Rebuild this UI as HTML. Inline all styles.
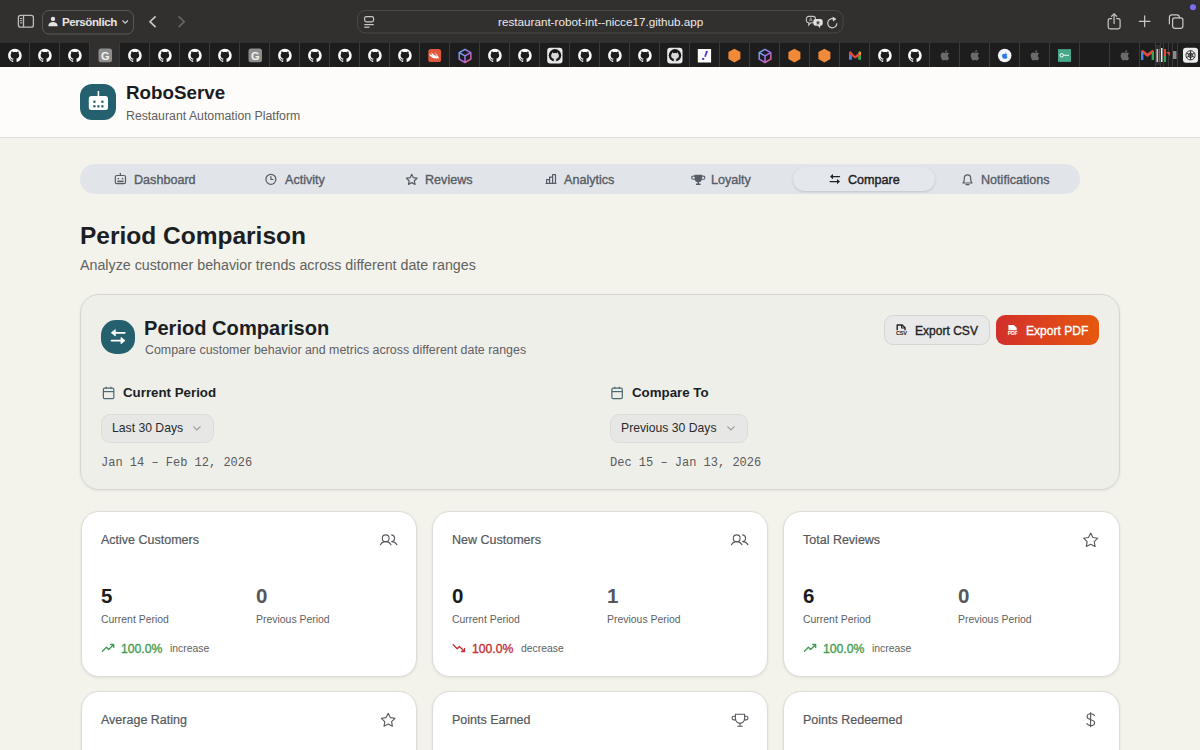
<!DOCTYPE html>
<html><head><meta charset="utf-8">
<style>
*{box-sizing:border-box;margin:0;padding:0}
html,body{width:1200px;height:750px;overflow:hidden;background:#f3f3ec;font-family:"Liberation Sans",sans-serif;position:relative}
.t{position:absolute;white-space:nowrap;line-height:1}
svg{position:absolute;overflow:visible}
.b{position:absolute}
#chrome{position:absolute;left:0;top:0;width:1200px;height:43px;background:#32302f}
#tabs{position:absolute;left:0;top:43px;width:1200px;height:24px;background:#1d1d1d}
.sep{position:absolute;top:43px;width:1px;height:24px;background:#3b3b3b}
#header{position:absolute;left:0;top:67px;width:1200px;height:71px;background:#fdfcfa;border-bottom:1px solid #dfddd8}
.logo{position:absolute;left:80px;top:84px;width:36px;height:36px;border-radius:12px;background:#24606e}
#nav{position:absolute;left:80px;top:164px;width:1000px;height:30px;border-radius:15px;background:#e1e4e9}
.pill{position:absolute;left:793px;top:167px;width:142px;height:24px;border-radius:12px;background:#e4e7ec;box-shadow:0 1px 2.5px rgba(0,0,0,.14)}
.nav{font-size:12.6px;color:#575d66;top:174px;-webkit-text-stroke:0.35px #575d66}
#pc{position:absolute;left:80px;top:294px;width:1040px;height:196px;border-radius:19px;background:#efefea;border:1px solid #d6d7d1;box-shadow:0 1px 3px rgba(0,0,0,.07)}
.btn{position:absolute;top:315px;height:30px;border-radius:9px}
.dd{position:absolute;top:414px;height:29px;border-radius:9px;background:#e7e7e5;border:1px solid #dcdcd9}
.card{position:absolute;width:336px;height:166px;border-radius:18px;background:#fff;border:1px solid #dddcd7;box-shadow:0 1px 3px rgba(0,0,0,.08)}
.ct{font-size:12.5px;color:#56595d;-webkit-text-stroke:0.22px #56595d}
.val{font-size:20.5px;font-weight:bold;letter-spacing:0.3px}
.lbl{font-size:10.45px;color:#5d5f62}
.pct{font-size:12.2px;-webkit-text-stroke:0.35px currentColor}
.inc{font-size:10.4px;color:#5d5f62}
.mono{font-family:"Liberation Mono",monospace;font-size:12px;color:#5a5a5a}
.ic{fill:none;stroke:#575d66;stroke-width:1.2;stroke-linecap:round;stroke-linejoin:round}
.ci{fill:none;stroke:#55585c;stroke-width:1.1;stroke-linecap:round;stroke-linejoin:round}
</style></head>
<body>
<svg width="0" height="0" style="position:absolute">
<defs>
<path id="gh" d="M8 0C3.58 0 0 3.58 0 8c0 3.54 2.29 6.53 5.47 7.59.4.07.55-.17.55-.38 0-.19-.01-.82-.01-1.49-2.01.37-2.53-.49-2.69-.94-.09-.23-.48-.94-.82-1.130-.28-.15-.68-.52-.01-.53.63-.01 1.08.58 1.23.82.72 1.21 1.87.87 2.33.66.07-.52.28-.87.51-1.07-1.78-.2-3.64-.89-3.64-3.95 0-.87.31-1.59.82-2.15-.08-.2-.36-1.02.08-2.12 0 0 .67-.21 2.2.82.64-.18 1.32-.27 2-.27.68 0 1.36.09 2 .27 1.53-1.04 2.2-.82 2.2-.82.44 1.1.16 1.92.08 2.12.51.56.82 1.27.82 2.15 0 3.07-1.87 3.75-3.65 3.95.29.25.54.73.54 1.48 0 1.07-.01 1.93-.01 2.2 0 .21.15.46.55.38A8.013 8.013 0 0 0 16 8c0-4.42-3.58-8-8-8z"/>
<path id="apple" d="M11.2 8.5c0-1.6 1.3-2.3 1.4-2.4-.8-1.1-1.9-1.3-2.3-1.3-1-.1-1.9.6-2.4.6-.5 0-1.2-.6-2-.6C4.900 4.800 3.900 5.400 3.400 6.300c-1.1 1.900-.3 4.700.8 6.200.5.7 1.100 1.600 1.900 1.500.8 0 1-.5 2-.5s1.200.5 2 .5c.8 0 1.300-.8 1.800-1.500.6-.8.8-1.600.8-1.700 0 0-1.500-.6-1.500-2.300zM9.700 3.800c.4-.5.7-1.200.6-1.900-.6 0-1.300.4-1.700.9-.4.400-.7 1.100-.6 1.800.7.100 1.300-.3 1.700-.8z"/>
<path id="star" d="M12 2.5l2.9 6.1 6.6.8-4.9 4.6 1.300 6.600L12 17.300 6.100 20.600l1.300-6.600L2.500 9.400l6.600-.8z"/>
</defs></svg>

<!-- ============ browser chrome ============ -->
<div id="chrome"></div>
<!-- sidebar icon -->
<svg style="left:0;top:0" width="1200" height="43" viewBox="0 0 1200 43">
  <g fill="none" stroke="#bdbcbb" stroke-width="1.3">
    <rect x="18.4" y="15.4" width="15" height="11.8" rx="2.2"/>
    <line x1="23.5" y1="15.4" x2="23.5" y2="27.2"/>
  </g>
  <g fill="#bdbcbb"><rect x="20" y="18" width="2.3" height="1"/><rect x="20" y="20.2" width="2.3" height="1"/><rect x="20" y="22.4" width="2.3" height="1"/></g>
  <rect x="42.5" y="10.5" width="91" height="23.5" rx="6.5" fill="none" stroke="#5a5856" stroke-width="1"/>
  <!-- person -->
  <circle cx="53" cy="18.9" r="2.2" fill="#e4e4e4"/>
  <path d="M48.3 26.2c0-2.8 2.2-4.2 4.7-4.2s4.7 1.4 4.7 4.200z" fill="#e4e4e4"/>
  <path d="M122.5 20.5l2.7 2.700 2.700-2.700" fill="none" stroke="#cfcfcf" stroke-width="1.2"/>
  <path d="M155.6 16.3l-5.6 5.400 5.600 5.400" fill="none" stroke="#c9c9c9" stroke-width="1.6"/>
  <path d="M178.6 16.3l5.6 5.400-5.600 5.400" fill="none" stroke="#676665" stroke-width="1.6"/>
  <!-- url bar -->
  <rect x="357.5" y="10.5" width="485.5" height="22.5" rx="8" fill="#32302f" stroke="#4a4846" stroke-width="1"/>
  <g fill="none" stroke="#c8c8c8" stroke-width="1.2">
    <rect x="364.6" y="16.6" width="9" height="5.2" rx="1.8"/>
    <line x1="364.3" y1="24.600" x2="373.8" y2="24.6"/>
    <line x1="364.3" y1="27.200" x2="369.5" y2="27.2"/>
  </g>
  <!-- translate -->
  <path d="M808.600 16.400h4.600a2.200 2.200 0 0 1 2.200 2.200v2a2.200 2.200 0 0 1-2.200 2.200h-2.600l-1.900 2.200v-2.200h-.1a2.200 2.200 0 0 1-2.200-2.200v-2a2.200 2.200 0 0 1 2.200-2.200z" fill="none" stroke="#c4c4c4" stroke-width="1.1"/>
  <path d="M809.300 21.300l1.500-3.600 1.500 3.600M809.800 20.200h2" fill="none" stroke="#aaa" stroke-width="0.8"/>
  <path d="M815.600 19h4.800a2.300 2.300 0 0 1 2.300 2.300v2.100a2.300 2.300 0 0 1-2.300 2.300h-.3v2.500l-2.200-2.500h-2.300a2.300 2.300 0 0 1-2.300-2.300v-2.100a2.300 2.300 0 0 1 2.300-2.300z" fill="#e2e2e2"/>
  <path d="M818 20.300l.7 1.500 1.600.2-1.200 1.100.3 1.600-1.400-.8-1.400.8.3-1.600-1.200-1.100 1.600-.2z" fill="#555"/>
  <path d="M835.300 19.700a4.600 4.600 0 1 0 1.600 3.600" fill="none" stroke="#cfcfcf" stroke-width="1.2"/>
  <path d="M832.600 16.500l3.700 2.600-3.300 2.300z" fill="#d8d8d8"/>
  <!-- share -->
  <g fill="none" stroke="#c8c8c8" stroke-width="1.2" stroke-linecap="round" stroke-linejoin="round">
    <path d="M1111.600 18.600h-1.600a1.800 1.800 0 0 0-1.800 1.800v6.600a1.800 1.800 0 0 0 1.800 1.800h8.300a1.800 1.800 0 0 0 1.800-1.800v-6.600a1.800 1.800 0 0 0-1.800-1.800h-1.600"/>
    <line x1="1114.100" y1="14" x2="1114.100" y2="23.500"/>
    <path d="M1111.600 16.300l2.500-2.400 2.500 2.400"/>
    <line x1="1139.300" y1="21.300" x2="1150" y2="21.300"/>
    <line x1="1144.650" y1="15.900" x2="1144.650" y2="26.600"/>
    <rect x="1172.600" y="17.800" width="10.300" height="10.500" rx="2.200"/>
    <path d="M1169.400 23.800v-6.700a2.300 2.300 0 0 1 2.300-2.300h5.300a2.300 2.300 0 0 1 2.300 2.300v.7"/>
  </g>
  <circle cx="1193" cy="7.2" r="3" fill="#7b6ef2"/>
</svg>
<div class="t" style="left:62px;top:16px;font-size:11.6px;letter-spacing:-0.45px;font-weight:bold;color:#e6e6e6">Persönlich</div>
<div class="t" style="left:498px;top:16px;font-size:11.7px;color:#e9e9e9">restaurant-robot-int--nicce17.github.app</div>

<!-- tab strip -->
<div id="tabs"></div>
<div class="b" style="left:90px;top:43px;width:30px;height:24px;background:#32302f"></div>
<svg style="left:0;top:43px" width="1200" height="24" viewBox="0 0 1200 24" id="tabsvg"><rect x="29" y="0" width="1" height="24" fill="#3a3a3a"/><rect x="59" y="0" width="1" height="24" fill="#3a3a3a"/><rect x="89" y="0" width="1" height="24" fill="#3a3a3a"/><rect x="119" y="0" width="1" height="24" fill="#3a3a3a"/><rect x="149" y="0" width="1" height="24" fill="#3a3a3a"/><rect x="179" y="0" width="1" height="24" fill="#3a3a3a"/><rect x="209" y="0" width="1" height="24" fill="#3a3a3a"/><rect x="239" y="0" width="1" height="24" fill="#3a3a3a"/><rect x="269" y="0" width="1" height="24" fill="#3a3a3a"/><rect x="299" y="0" width="1" height="24" fill="#3a3a3a"/><rect x="329" y="0" width="1" height="24" fill="#3a3a3a"/><rect x="359" y="0" width="1" height="24" fill="#3a3a3a"/><rect x="389" y="0" width="1" height="24" fill="#3a3a3a"/><rect x="419" y="0" width="1" height="24" fill="#3a3a3a"/><rect x="449" y="0" width="1" height="24" fill="#3a3a3a"/><rect x="479" y="0" width="1" height="24" fill="#3a3a3a"/><rect x="509" y="0" width="1" height="24" fill="#3a3a3a"/><rect x="539" y="0" width="1" height="24" fill="#3a3a3a"/><rect x="569" y="0" width="1" height="24" fill="#3a3a3a"/><rect x="599" y="0" width="1" height="24" fill="#3a3a3a"/><rect x="629" y="0" width="1" height="24" fill="#3a3a3a"/><rect x="659" y="0" width="1" height="24" fill="#3a3a3a"/><rect x="689" y="0" width="1" height="24" fill="#3a3a3a"/><rect x="719" y="0" width="1" height="24" fill="#3a3a3a"/><rect x="749" y="0" width="1" height="24" fill="#3a3a3a"/><rect x="779" y="0" width="1" height="24" fill="#3a3a3a"/><rect x="809" y="0" width="1" height="24" fill="#3a3a3a"/><rect x="839" y="0" width="1" height="24" fill="#3a3a3a"/><rect x="869" y="0" width="1" height="24" fill="#3a3a3a"/><rect x="899" y="0" width="1" height="24" fill="#3a3a3a"/><rect x="929" y="0" width="1" height="24" fill="#3a3a3a"/><rect x="959" y="0" width="1" height="24" fill="#3a3a3a"/><rect x="989" y="0" width="1" height="24" fill="#3a3a3a"/><rect x="1019" y="0" width="1" height="24" fill="#3a3a3a"/><rect x="1049" y="0" width="1" height="24" fill="#3a3a3a"/><rect x="1079" y="0" width="1" height="24" fill="#3a3a3a"/><rect x="1109" y="0" width="1" height="24" fill="#3a3a3a"/><rect x="1139" y="0" width="1" height="24" fill="#3a3a3a"/><rect x="1155" y="0" width="1" height="24" fill="#3a3a3a"/><rect x="1160" y="0" width="1" height="24" fill="#3a3a3a"/><rect x="1163" y="0" width="1" height="24" fill="#3a3a3a"/><rect x="1168" y="0" width="1" height="24" fill="#3a3a3a"/><rect x="1172" y="0" width="1" height="24" fill="#3a3a3a"/><rect x="1177" y="0" width="1" height="24" fill="#3a3a3a"/><use href="#gh" transform="translate(8.1,5.800000000000001) scale(0.85)" fill="#fff"/><use href="#gh" transform="translate(38.1,5.800000000000001) scale(0.85)" fill="#fff"/><use href="#gh" transform="translate(68.1,5.800000000000001) scale(0.85)" fill="#fff"/><rect x="98.5" y="5.6000000000000005" width="13.5" height="13.7" rx="2.5" fill="#8e8e8e"/><text x="105.3" y="16.6" font-family="Liberation Sans" font-weight="bold" font-size="11" fill="#f2f2f2" text-anchor="middle">G</text><use href="#gh" transform="translate(128.1,5.800000000000001) scale(0.85)" fill="#fff"/><use href="#gh" transform="translate(158.1,5.800000000000001) scale(0.85)" fill="#fff"/><use href="#gh" transform="translate(188.1,5.800000000000001) scale(0.85)" fill="#fff"/><use href="#gh" transform="translate(218.1,5.800000000000001) scale(0.85)" fill="#fff"/><rect x="248.5" y="5.6000000000000005" width="13.5" height="13.7" rx="2.5" fill="#8e8e8e"/><text x="255.3" y="16.6" font-family="Liberation Sans" font-weight="bold" font-size="11" fill="#f2f2f2" text-anchor="middle">G</text><use href="#gh" transform="translate(278.1,5.800000000000001) scale(0.85)" fill="#fff"/><use href="#gh" transform="translate(308.1,5.800000000000001) scale(0.85)" fill="#fff"/><use href="#gh" transform="translate(338.1,5.800000000000001) scale(0.85)" fill="#fff"/><use href="#gh" transform="translate(368.1,5.800000000000001) scale(0.85)" fill="#fff"/><use href="#gh" transform="translate(398.1,5.800000000000001) scale(0.85)" fill="#fff"/><rect x="428.3" y="6.000000000000001" width="12.8" height="13" rx="2.6" fill="#e0573d"/><path d="M431 9.3c2 1.8 4 3.300 6 4.300-.4-1.500-1.600-3.300-2.800-4.600 1.800 1.400 3.300 3 4.100 4.700.6 1.200.4 2.100.3 2.200-.4-.5-1.100-.6-1.700-.5-1.800.3-3.600.2-5.600-1.300-1.200-.9-1.800-2-2.300-3.500 1.300 1 2.300 1.600 3.300 2z" fill="#fff"/><defs><linearGradient id="cg15" x1="0" y1="0" x2="1" y2="1"><stop offset="0" stop-color="#5fb7f0"/><stop offset=".5" stop-color="#a66ef2"/><stop offset="1" stop-color="#f0607a"/></linearGradient></defs><g fill="none" stroke="url(#cg15)" stroke-width="1.5" stroke-linejoin="round"><path d="M465 6.300000000000001l5.800 3.300v6.600L465 19.5l-5.800-3.300v-6.600z"/><path d="M459.2 9.600000000000001L465 12.9l5.800-3.300M465 12.9v6.600"/></g><use href="#gh" transform="translate(488.1,5.800000000000001) scale(0.85)" fill="#fff"/><use href="#gh" transform="translate(518.1,5.800000000000001) scale(0.85)" fill="#fff"/><rect x="547.2" y="4.800000000000001" width="15.3" height="15.6" rx="3" fill="#e9e9e9"/><circle cx="555" cy="12.3" r="6.2" fill="#1a1a1a"/><path d="M552.4 9.0l.8 1.2c.6-.2 1.200-.3 1.800-.3s1.200.1 1.800.3l.8-1.200.4 1.600c.6.6.9 1.400.9 2.200 0 1.700-1.200 2.700-2.700 3v3.300h-2.400v-3.300c-1.500-.3-2.700-1.300-2.700-3 0-.8.3-1.600.9-2.200z" fill="#d8d8d8"/><use href="#gh" transform="translate(578.1,5.800000000000001) scale(0.85)" fill="#fff"/><use href="#gh" transform="translate(608.1,5.800000000000001) scale(0.85)" fill="#fff"/><use href="#gh" transform="translate(638.1,5.800000000000001) scale(0.85)" fill="#fff"/><rect x="667.2" y="4.800000000000001" width="15.3" height="15.6" rx="3" fill="#e9e9e9"/><circle cx="675" cy="12.3" r="6.2" fill="#1a1a1a"/><path d="M672.4 9.0l.8 1.2c.6-.2 1.200-.3 1.800-.3s1.200.1 1.800.3l.8-1.200.4 1.600c.6.6.9 1.400.9 2.200 0 1.700-1.200 2.700-2.700 3v3.300h-2.400v-3.300c-1.500-.3-2.700-1.300-2.700-3 0-.8.3-1.600.9-2.200z" fill="#d8d8d8"/><rect x="697.8" y="6.000000000000001" width="13.3" height="13.5" fill="#fdfdfd"/><path d="M706 7.800000000000001l2.100.5-2.300 5.600-1.600-.4z" fill="#5b3fd6"/><circle cx="703.2" cy="15.9" r="1.2" fill="#5b3fd6"/><path d="M734.4 5.700000000000001l6 3.400v6.900l-6 3.400-6-3.400v-6.900z" fill="#f08a38"/><defs><linearGradient id="cg25" x1="0" y1="0" x2="1" y2="1"><stop offset="0" stop-color="#5fb7f0"/><stop offset=".5" stop-color="#a66ef2"/><stop offset="1" stop-color="#f0607a"/></linearGradient></defs><g fill="none" stroke="url(#cg25)" stroke-width="1.5" stroke-linejoin="round"><path d="M765 6.300000000000001l5.800 3.300v6.600L765 19.5l-5.800-3.300v-6.600z"/><path d="M759.2 9.600000000000001L765 12.9l5.800-3.300M765 12.9v6.600"/></g><path d="M794.4 5.700000000000001l6 3.400v6.900l-6 3.400-6-3.400v-6.900z" fill="#f08a38"/><path d="M824.4 5.700000000000001l6 3.400v6.900l-6 3.400-6-3.400v-6.900z" fill="#f08a38"/><path d="M849 16.8v-7.500l1.500-1.100 1.300 1 .1 7.600z" fill="#4a86e8"/><path d="M861 16.8v-7.500l-1.500-1.100-1.300 1-.1 7.600z" fill="#34a853"/><path d="M849 9.3l1.500-1.100L855 12.9l4.500-3.600 1.500 1.100v1.900L855 15.5l-6-4.500z" fill="#e04a3a"/><path d="M859.5 8.200000000000001l1.500 1.100v1.900l-1.500 1.100z" fill="#f4b400"/><use href="#gh" transform="translate(878.1,5.800000000000001) scale(0.85)" fill="#fff"/><use href="#gh" transform="translate(908.1,5.800000000000001) scale(0.85)" fill="#fff"/><use href="#apple" transform="translate(938.2,5.4) scale(0.86)" fill="#6a6a6a"/><use href="#apple" transform="translate(968.2,5.4) scale(0.86)" fill="#6a6a6a"/><circle cx="1004.7" cy="12.5" r="6.8" fill="#f4f5fb"/><use href="#apple" transform="translate(1000.5,8.100000000000001) scale(0.55)" fill="#2a78f0"/><use href="#apple" transform="translate(1028.2,5.4) scale(0.86)" fill="#6a6a6a"/><rect x="1058" y="6.1000000000000005" width="13" height="12.8" fill="#48a78a"/><circle cx="1061.7" cy="12.3" r="1.7" fill="none" stroke="#fff" stroke-width="1"/><rect x="1063.5" y="11.700000000000001" width="5.5" height="1.2" fill="#cfeee4"/><use href="#apple" transform="translate(1118.2,5.4) scale(0.86)" fill="#6a6a6a"/><path d="M1141 17v-9l1.600-1.200L1147.500 10.500l4.900-3.700L1154 8v9h-2.200v-6.300L1147.500 14l-4.300-3.300V17z" fill="#e04a3a"/><rect x="1141" y="9" width="2.200" height="8" fill="#4a86e8"/><rect x="1151.800" y="9" width="2.200" height="8" fill="#34a853"/><rect x="1156" y="2" width="4" height="20" fill="#2e2e2e"/><rect x="1156.500" y="6" width="1.500" height="13" fill="#c8c8c8"/><rect x="1158.800" y="6" width="1" height="13" fill="#777"/><rect x="1161" y="5" width="1.500" height="14" fill="#e8e8e8"/><rect x="1164" y="6" width="2" height="7" fill="#e04a3a"/><rect x="1164" y="13" width="2" height="6" fill="#34a853"/><path d="M1166 9l4 4v-4z" fill="#d5453a"/><rect x="1173" y="8" width="3.500" height="8" fill="#8a8a8a"/><rect x="1183" y="4.8" width="15" height="15" rx="3" fill="#ececec"/><g fill="none" stroke="#222" stroke-width="0.9"><circle cx="1190.500" cy="12.300" r="4.600"/><circle cx="1190.500" cy="12.300" r="2.200"/><path d="M1186.500 10.100l8 4.400M1194.500 10.100l-8 4.400M1190.500 7.700v9.200"/></g></svg>

<!-- ============ header ============ -->
<div id="header"></div>
<div class="logo"></div>
<svg style="left:80px;top:84px" width="36" height="36" viewBox="0 0 36 36">
  <rect x="8.8" y="12" width="19.2" height="14" rx="2.5" fill="#fff"/>
  <rect x="17.6" y="7" width="1.6" height="5" fill="#fff"/>
  <rect x="13.3" y="16.6" width="2.2" height="2.2" fill="#245e6c"/>
  <rect x="21.3" y="16.6" width="2.2" height="2.2" fill="#245e6c"/>
  <rect x="13.3" y="21.2" width="2.2" height="2.2" fill="#245e6c"/>
  <rect x="17.3" y="21.2" width="2.2" height="2.2" fill="#245e6c"/>
  <rect x="21.3" y="21.2" width="2.2" height="2.2" fill="#245e6c"/>
</svg>
<div class="t" style="left:126px;top:84px;font-size:18.8px;font-weight:bold;color:#1a1c1f">RoboServe</div>
<div class="t" style="left:126px;top:109.5px;font-size:12.3px;color:#5f5f5f">Restaurant Automation Platform</div>

<!-- ============ nav ============ -->
<div id="nav"></div>
<div class="pill"></div>
<svg style="left:0;top:0" width="1200" height="200" viewBox="0 0 1200 200">
  <g class="ic">
    <!-- robot -->
    <rect x="115.3" y="175.5" width="10.2" height="8.2" rx="1.6"/>
    <line x1="120.4" y1="173.3" x2="120.4" y2="175.5"/>
    <!-- clock -->
    <circle cx="270.9" cy="179.3" r="5"/>
    <path d="M270.9 176.6v2.900h2.300"/>
    <!-- star -->
    <path d="M411.75 174.3l1.600 3.400 3.700.5-2.700 2.600.7 3.600-3.300-1.800-3.300 1.800.7-3.600-2.700-2.600 3.700-.5z"/>
    <!-- bars -->
    <path d="M546.6 183.3v-3.700h3v3.700M549.6 183.3v-6.200h3v6.200M552.6 183.3v-8.600h2.900v8.600M546 183.3h10"/>
    <!-- bell -->
    <path d="M963 183h9c-.9-.9-1.300-2-1.300-3.500v-1.500a3.200 3.200 0 0 0-6.400 0v1.500c0 1.500-.4 2.600-1.300 3.500z"/>
    <path d="M966 184.6h3"/>
  </g>
  <g fill="#575d66">
    <rect x="117.6" y="178" width="1.5" height="1.3"/><rect x="121.8" y="178" width="1.5" height="1.3"/>
    <rect x="117.3" y="180.6" width="6.3" height="1.6"/>
    <!-- trophy -->
    <path d="M694.600 174.8h7.400v3.800a3.700 3.700 0 0 1-7.400 0z"/>
    <path d="M694.900 176.100h-1.700a1.300 1.300 0 0 0 0 3.100h1.900M701.700 176.100h1.700a1.300 1.300 0 0 1 0 3.100h-1.900" fill="none" stroke="#575d66" stroke-width="1.1"/>
    <rect x="697.600" y="181.8" width="1.400" height="2.200"/>
    <rect x="695.800" y="183.600" width="5" height="1.300" rx=".6"/>
  </g>
  <!-- compare arrows -->
  <g stroke="#1e2227" stroke-width="1.4" fill="none" stroke-linecap="round">
    <line x1="832" y1="176.6" x2="839.5" y2="176.6"/>
    <line x1="830.2" y1="181.6" x2="837.7" y2="181.6"/>
  </g>
  <path d="M830 176.6l3-2.600v5.200z M840 181.6l-3-2.600v5.200z" fill="#1e2227"/>
</svg>
<div class="t nav" style="left:134px">Dashboard</div>
<div class="t nav" style="left:285px">Activity</div>
<div class="t nav" style="left:425px">Reviews</div>
<div class="t nav" style="left:564px">Analytics</div>
<div class="t nav" style="left:711px">Loyalty</div>
<div class="t nav" style="left:848px;color:#1e2227;-webkit-text-stroke:0.4px #1e2227">Compare</div>
<div class="t nav" style="left:981px">Notifications</div>

<!-- ============ title ============ -->
<div class="t" style="left:80px;top:223.5px;font-size:24.5px;font-weight:bold;color:#1b1e23">Period Comparison</div>
<div class="t" style="left:80px;top:257.5px;font-size:14.25px;color:#62625f">Analyze customer behavior trends across different date ranges</div>

<!-- ============ comparison card ============ -->
<div id="pc"></div>
<div class="b" style="left:101px;top:320px;width:34px;height:34px;border-radius:15px;background:#24606e"></div>
<svg style="left:101px;top:320px" width="34" height="34" viewBox="0 0 34 34">
  <g stroke="#fff" stroke-width="1.7" fill="none" stroke-linecap="round">
    <path d="M23.800 12.800H13"/>
    <path d="M10.500 20.600h10.500"/>
  </g>
  <path d="M10.300 12.800l4-3.200v6.400z M24 20.600l-4-3.200v6.400z" fill="#fff" stroke="#fff" stroke-width="0.8" stroke-linejoin="round"/>
</svg>
<div class="t" style="left:144px;top:317.5px;font-size:20.1px;font-weight:bold;color:#1b1e23">Period Comparison</div>
<div class="t" style="left:145px;top:344px;font-size:12.42px;color:#5f6063">Compare customer behavior and metrics across different date ranges</div>
<div class="btn" style="left:884px;width:106px;background:#e8e9e8;border:1px solid #d5d6d3"></div>
<div class="btn" style="left:996px;width:103px;background:linear-gradient(90deg,#d22f2b,#e6580f)"></div>
<svg style="left:0;top:0" width="1200" height="360" viewBox="0 0 1200 360">
  <path d="M897.200 330.200v-5.200h5l2.800 2.700v2.500" fill="none" stroke="#222" stroke-width="1.4" stroke-linejoin="round"/>
  <path d="M901.600 325v3h3" fill="none" stroke="#222" stroke-width="1.1"/>
  <text x="896" y="335.2" font-family="Liberation Sans" font-weight="bold" font-size="5.6" letter-spacing="-0.2" fill="#222">CSV</text>
  <path d="M1008.400 330.300v-5.400h5.300l3 2.900v2.500z" fill="#fff"/>
  <text x="1007.800" y="335.2" font-family="Liberation Sans" font-weight="bold" font-size="5.2" letter-spacing="-0.2" fill="#fff">PDF</text>
</svg>
<div class="t" style="left:915px;top:324.5px;font-size:12.05px;color:#222;-webkit-text-stroke:0.35px #222">Export CSV</div>
<div class="t" style="left:1026px;top:324.5px;font-size:12.05px;color:#fff;-webkit-text-stroke:0.35px #fff">Export PDF</div>

<svg style="left:0;top:0" width="1200" height="450" viewBox="0 0 1200 450">
  <g fill="none" stroke="#4b6a70" stroke-width="1.2">
    <rect x="103.4" y="388.2" width="10.4" height="10.4" rx="1.2"/>
    <line x1="103.4" y1="391.6" x2="113.8" y2="391.6"/>
    <line x1="106.3" y1="386.8" x2="106.3" y2="388.8"/>
    <line x1="110.9" y1="386.8" x2="110.9" y2="388.8"/>
    <rect x="611.9" y="388.2" width="10.4" height="10.4" rx="1.2"/>
    <line x1="611.9" y1="391.6" x2="622.3" y2="391.6"/>
    <line x1="614.8" y1="386.8" x2="614.8" y2="388.8"/>
    <line x1="619.4" y1="386.8" x2="619.4" y2="388.8"/>
  </g>
</svg>
<div class="t" style="left:123px;top:386px;font-size:13.3px;font-weight:bold;color:#1b1e23">Current Period</div>
<div class="t" style="left:632px;top:386px;font-size:13.3px;font-weight:bold;color:#1b1e23">Compare To</div>
<div class="dd" style="left:101px;width:113px"></div>
<div class="dd" style="left:610px;width:138px"></div>
<div class="t" style="left:112px;top:422px;font-size:12.2px;color:#2a2b2d">Last 30 Days</div>
<div class="t" style="left:621px;top:422px;font-size:12.2px;color:#2a2b2d">Previous 30 Days</div>
<svg style="left:0;top:0" width="1200" height="450" viewBox="0 0 1200 450">
  <path d="M193.300 426.300l3.600 3.600 3.600-3.600M727.300 426.300l3.600 3.600 3.600-3.600" fill="none" stroke="#9a9b9c" stroke-width="1.1"/>
</svg>
<div class="t mono" style="left:101px;top:457px">Jan 14 – Feb 12, 2026</div>
<div class="t mono" style="left:610px;top:457px">Dec 15 – Jan 13, 2026</div>

<!-- ============ metric cards ============ -->
<div class="card" style="left:81px;top:511px"></div>
<div class="card" style="left:432px;top:511px"></div>
<div class="card" style="left:783px;top:511px;width:337px"></div>
<div class="card" style="left:81px;top:691px"></div>
<div class="card" style="left:432px;top:691px"></div>
<div class="card" style="left:783px;top:691px;width:337px"></div>

<svg style="left:0;top:0" width="1200" height="750" viewBox="0 0 1200 750">
  <g class="ci">
    <!-- users card1 -->
    <circle cx="385.7" cy="538.3" r="3.400"/>
    <path d="M380.400 544.800a6 6 0 0 1 10.600 0"/>
    <path d="M391.600 534.900a3.400 3.400 0 0 1 .3 6.700"/>
    <path d="M391.900 541.600a6 6 0 0 1 5 3.200"/>
    <!-- users card2 -->
    <circle cx="736.700" cy="538.3" r="3.400"/>
    <path d="M731.400 544.800a6 6 0 0 1 10.600 0"/>
    <path d="M742.600 534.900a3.400 3.400 0 0 1 .3 6.700"/>
    <path d="M742.900 541.600a6 6 0 0 1 5 3.200"/>
    <!-- star card3 -->
    <path d="M1090.700 533l2.200 4.500 4.900.7-3.550 3.450.85 4.900-4.400-2.300-4.400 2.300.85-4.900-3.550-3.450 4.900-.7z"/>
    <!-- star card4 -->
    <path d="M388.200 713.300l2.100 4.300 4.700.7-3.400 3.300.8 4.700-4.200-2.200-4.200 2.200.8-4.700-3.400-3.300 4.700-.7z"/>
    <!-- trophy card5 -->
    <path d="M735.400 714.300h9.200v4.300a4.600 4.600 0 0 1-9.200 0z"/>
    <path d="M735.400 716.300h-1.500a1.800 1.800 0 0 0 0 3.600h1.900M744.600 716.300h1.500a1.800 1.800 0 0 1 0 3.600h-1.900"/>
    <path d="M740 723.300v2.800M737.700 726.300h4.600"/>
    <!-- dollar card6 -->
    <path d="M1090.600 712.500v14.200"/>
    <path d="M1094.400 715.600c-.6-1.100-1.900-1.800-3.600-1.800-2.100 0-3.700 1.100-3.700 2.800 0 4 7.500 2.300 7.500 6.100 0 1.800-1.600 2.900-3.800 2.900-1.900 0-3.300-.8-3.900-2.100"/>
  </g>
  <g fill="none" stroke-width="1.3" stroke-linecap="round" stroke-linejoin="round">
    <path d="M102.400 651.200l4-4 2.300 2.300 5-5M110.600 644.500h3.100v3.100" stroke="#3f9e52"/>
    <path d="M453.200 644.800l4 4 2.300-2.300 5 5M461.400 651.500h3.100v-3.100" stroke="#c62f36"/>
    <path d="M804.400 651.200l4-4 2.300 2.300 5-5M812.600 644.500h3.100v3.100" stroke="#3f9e52"/>
  </g>
</svg>

<div class="t ct" style="left:101px;top:534.3px">Active Customers</div>
<div class="t ct" style="left:452px;top:534.3px">New Customers</div>
<div class="t ct" style="left:803px;top:534.3px">Total Reviews</div>
<div class="t ct" style="left:101px;top:714.3px">Average Rating</div>
<div class="t ct" style="left:452px;top:714.3px">Points Earned</div>
<div class="t ct" style="left:803px;top:714.3px">Points Redeemed</div>

<div class="t val" style="left:101px;top:586px;color:#1a1b1d">5</div>
<div class="t val" style="left:256px;top:586px;color:#55585c">0</div>
<div class="t lbl" style="left:101px;top:614.6px">Current Period</div>
<div class="t lbl" style="left:256px;top:614.6px">Previous Period</div>
<div class="t pct" style="left:121px;top:642.5px;color:#3f9e52">100.0%</div>
<div class="t inc" style="left:170px;top:644px">increase</div>

<div class="t val" style="left:452px;top:586px;color:#1a1b1d">0</div>
<div class="t val" style="left:607px;top:586px;color:#55585c">1</div>
<div class="t lbl" style="left:452px;top:614.6px">Current Period</div>
<div class="t lbl" style="left:607px;top:614.6px">Previous Period</div>
<div class="t pct" style="left:472px;top:642.5px;color:#c62f36">100.0%</div>
<div class="t inc" style="left:521px;top:644px">decrease</div>

<div class="t val" style="left:803px;top:586px;color:#1a1b1d">6</div>
<div class="t val" style="left:958px;top:586px;color:#55585c">0</div>
<div class="t lbl" style="left:803px;top:614.6px">Current Period</div>
<div class="t lbl" style="left:958px;top:614.6px">Previous Period</div>
<div class="t pct" style="left:823px;top:642.5px;color:#3f9e52">100.0%</div>
<div class="t inc" style="left:872px;top:644px">increase</div>
</body></html>
